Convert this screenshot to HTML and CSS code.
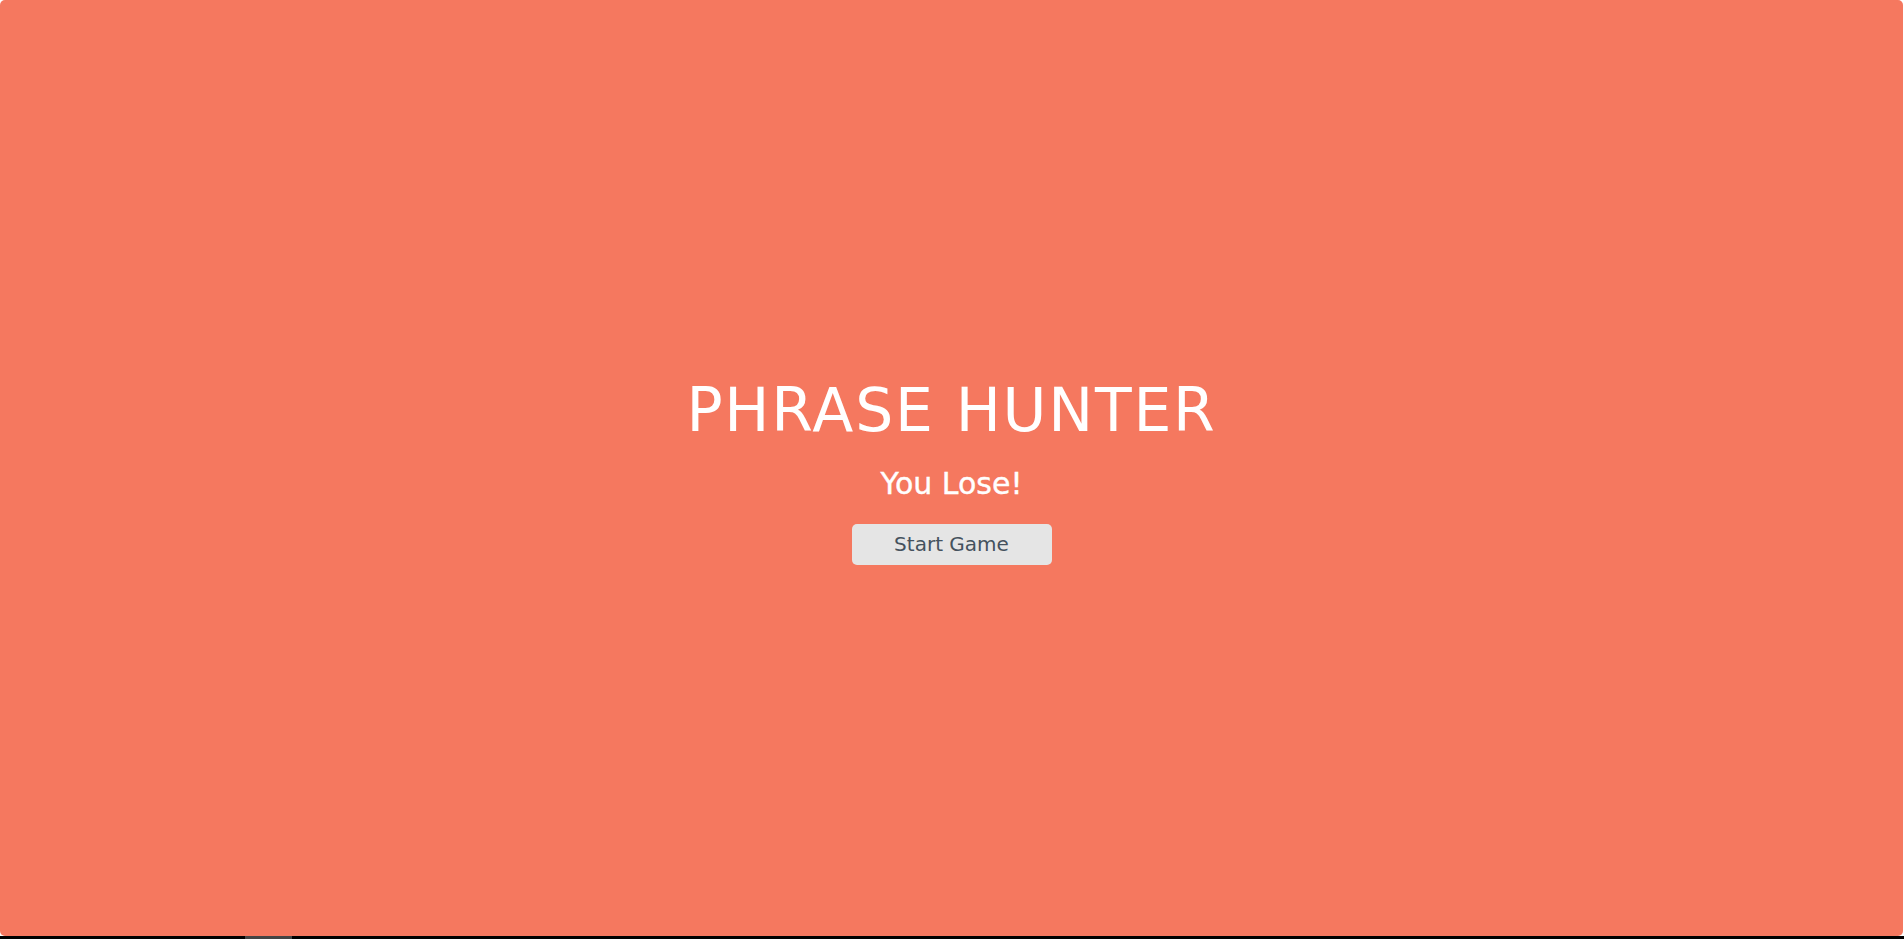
FILE: index.html
```html
<!DOCTYPE html>
<html lang="en">
<head>
<meta charset="utf-8">
<title>Phrase Hunter</title>
<link rel="stylesheet" href="styles.css">
</head>
<body>
  <div id="overlay" class="overlay lose">
    <h2 class="title">PHRASE HUNTER</h2>
    <h1 class="game-over-message">You Lose!</h1>
    <button class="btn-reset" type="button">Start Game</button>
  </div>
  <div class="bottom-strip"><span class="strip-thumb"></span></div>
</body>
</html>
```

FILE: styles.css
```css
html, body {
  margin: 0;
  padding: 0;
  background: #ffffff;
  font-family: "DejaVu Sans", "Liberation Sans", sans-serif;
}

.overlay {
  position: fixed;
  top: 0;
  left: 0;
  width: 1903px;
  height: 936px;
  box-sizing: border-box;
  padding-top: 4px;
  border-radius: 5px;
  display: flex;
  flex-direction: column;
  justify-content: center;
  align-items: center;
}

.lose {
  background-color: #f5785f;
}

.title {
  margin: 0;
  color: #ffffff;
  font-size: 60px;
  line-height: 70px;
  font-weight: normal;
  letter-spacing: 1.8px;
}

.game-over-message {
  margin: 22px 0 23px;
  color: #ffffff;
  font-size: 30px;
  line-height: 34px;
  font-weight: normal;
  -webkit-text-stroke: 0.4px #ffffff;
}

.btn-reset {
  width: 200px;
  height: 41px;
  padding: 9px 16px;
  border: none;
  border-radius: 5px;
  background-color: #e5e5e5;
  color: #45525e;
  font-family: "DejaVu Sans", "Liberation Sans", sans-serif;
  font-size: 20px;
  line-height: 23px;
  cursor: pointer;
}

.bottom-strip {
  position: fixed;
  left: 0;
  right: 0;
  bottom: 0;
  height: 3px;
  background: #000000;
}

.strip-thumb {
  position: absolute;
  left: 245px;
  top: 0;
  width: 47px;
  height: 3px;
  background: #444444;
}
```
